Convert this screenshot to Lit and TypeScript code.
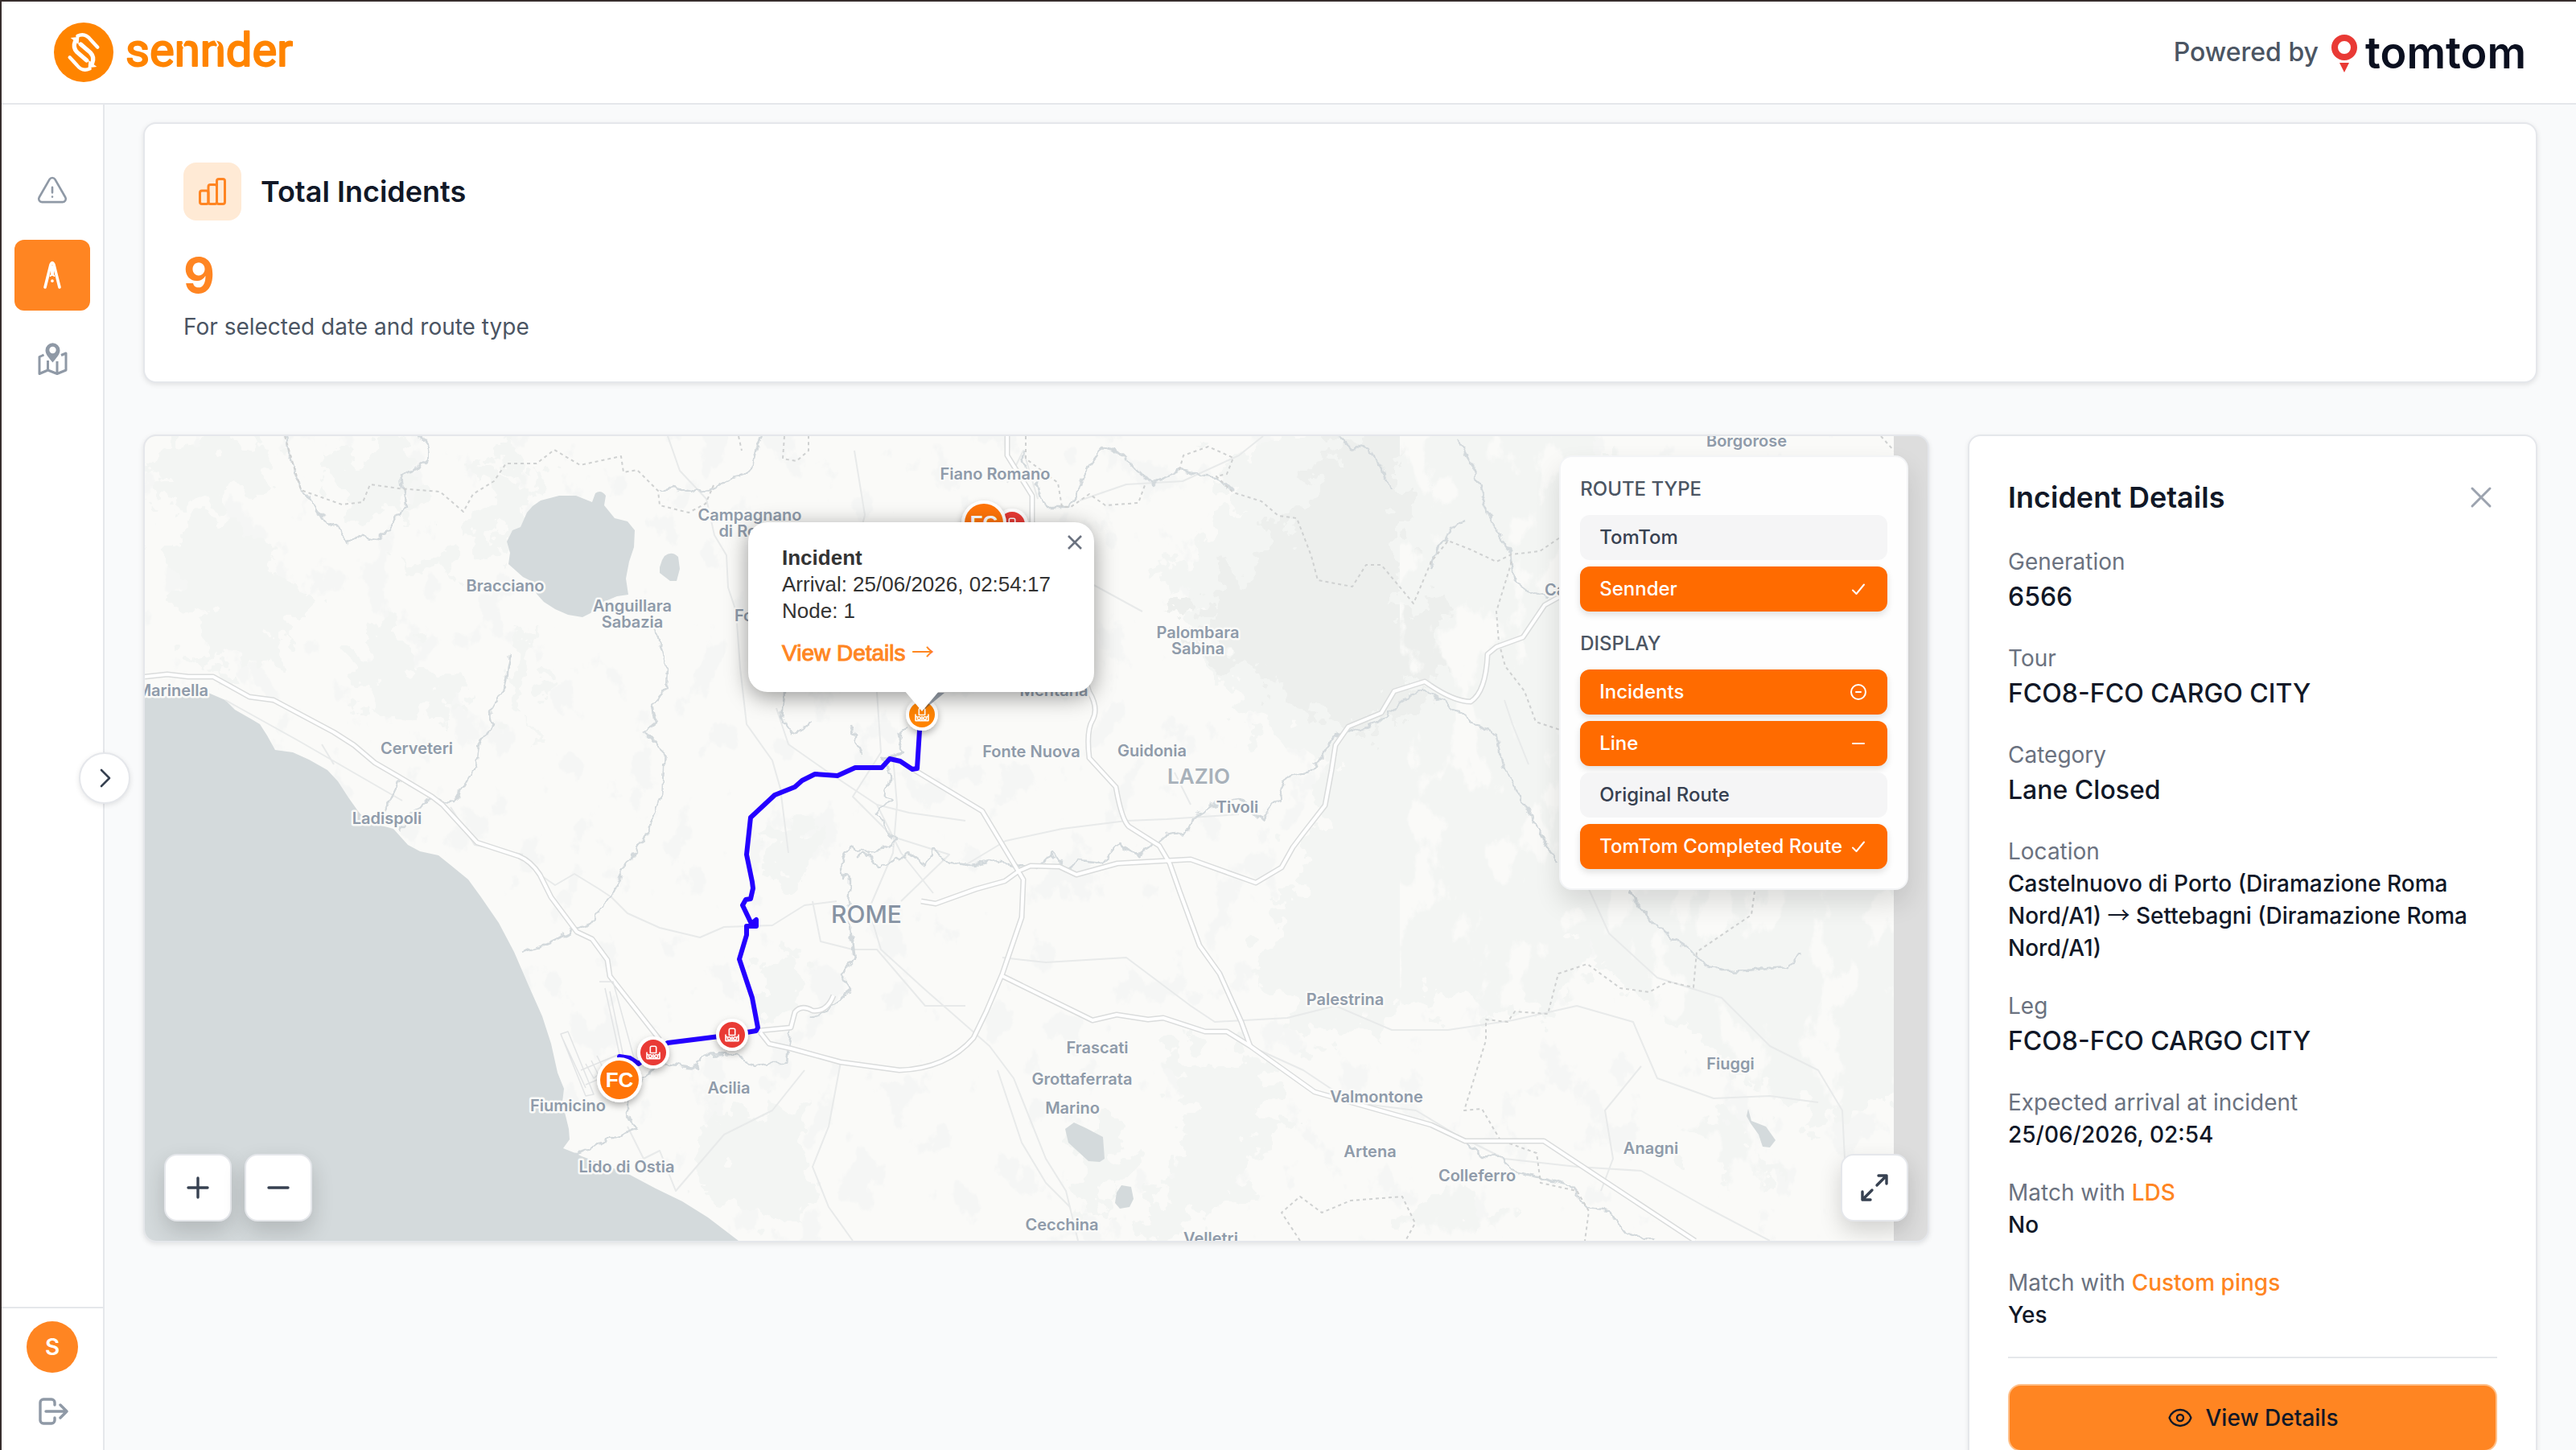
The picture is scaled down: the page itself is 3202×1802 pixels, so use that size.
import { LitElement, html, svg, css, nothing } from "lit";
import { customElement, property, state } from "lit/decorators.js";
import { classMap } from "lit/directives/class-map.js";

const base = css`
  *,
  *::before,
  *::after {
    box-sizing: border-box;
  }
  :host {
    font-family: Inter, "Liberation Sans", sans-serif;
    color: #111827;
  }
  button {
    font: inherit;
    color: inherit;
    padding: 0;
    border: 0;
    background: none;
    cursor: pointer;
  }
  a {
    color: inherit;
    text-decoration: none;
  }
  svg {
    display: block;
  }
  h1,
  h2,
  h3,
  p,
  dl,
  dt,
  dd {
    margin: 0;
  }
  .arrow {
    font-family: "Noto Sans CJK JP", sans-serif;
    font-weight: 400;
    line-height: 1;
    -webkit-text-stroke: 0;
  }
`;

/* ---------- Header ---------- */

@customElement("app-header")
export class AppHeader extends LitElement {
  static styles = [
    base,
    css`
      :host {
        display: flex;
        align-items: center;
        justify-content: space-between;
        height: 128px;
        padding: 0 64px;
        background: #fff;
        border-bottom: 2px solid #e5e7eb;
      }
      .partner {
        display: flex;
        align-items: center;
        gap: 16px;
        font-size: 32px;
        font-weight: 500;
        line-height: 48px;
        color: #4b5563;
      }
      .brand-text {
        font-family: Roboto, sans-serif;
        font-size: 58px;
        font-weight: 400;
        fill: #ff8400;
        stroke: #ff8400;
        stroke-width: 2;
        stroke-linejoin: round;
      }
      .partner-text {
        font-family: Inter, sans-serif;
        font-size: 54px;
        font-weight: 600;
        fill: #0b1020;
      }
    `,
  ];

  render() {
    return html`
      <a href="#home" aria-label="sennder home">
        <svg width="304" height="80" viewBox="0 0 304 80">
          <circle cx="38" cy="40" r="37" fill="#ff8400" />
          <g transform="translate(1 3) scale(0.3333) translate(-36 -39)" fill="none" stroke="#fff" stroke-linecap="round">
            <g>
              <path d="M124 89Q152 76 172 102L199 131" stroke-width="13" />
              <path d="M115 110Q106 132 122 149L158 180" stroke-width="16" />
              <path d="M98 96L130 92L128 120Z" fill="#fff" stroke="none" />
            </g>
            <g transform="rotate(180 147 150)">
              <path d="M124 89Q152 76 172 102L199 131" stroke-width="13" />
              <path d="M115 110Q106 132 122 149L158 180" stroke-width="16" />
              <path d="M98 96L130 92L128 120Z" fill="#fff" stroke="none" />
            </g>
          </g>
          <text class="brand-text" x="90" y="57">sennder</text>
          <path d="M166 22L161 31L165 38" fill="none" stroke="#fff" stroke-width="2" />
          <path d="M200 22L205 31L201 38" fill="none" stroke="#fff" stroke-width="2" />
        </svg>
      </a>
      <div class="partner">
        <span>Powered by</span>
        <svg width="240" height="72" viewBox="0 -8 240 72">
          <circle cx="16" cy="22" r="12" fill="none" stroke="#e93a35" stroke-width="8" />
          <path d="M10 41H22L16 53Z" fill="#e93a35" />
          <text class="partner-text" x="42" y="48">tomtom</text>
        </svg>
      </div>
    `;
  }
}

/* ---------- Side navigation ---------- */

@customElement("side-nav")
export class SideNav extends LitElement {
  static styles = [
    base,
    css`
      :host {
        position: relative;
        z-index: 2;
        display: flex;
        flex-direction: column;
        justify-content: space-between;
        width: 128px;
        background: #fff;
        border-right: 2px solid #e5e7eb;
        color: #8f99a6;
      }
      .links {
        display: flex;
        flex-direction: column;
        gap: 16px;
        padding: 64px 16px;
      }
      .link {
        display: grid;
        place-items: center;
        height: 88px;
        border-radius: 12px;
      }
      .link.active {
        background: #ff8522;
        color: #fff;
      }
      .account {
        display: flex;
        flex-direction: column;
        align-items: center;
        gap: 24px;
        padding: 16px 0 26px;
        border-top: 2px solid #e5e7eb;
      }
      .avatar {
        display: grid;
        place-items: center;
        width: 64px;
        height: 64px;
        border-radius: 50%;
        background: #ff8522;
        color: #fff;
        font-size: 28px;
        font-weight: 600;
      }
      .toggle {
        position: absolute;
        top: 50%;
        right: -34px;
        display: grid;
        place-items: center;
        width: 64px;
        height: 64px;
        transform: translateY(-50%);
        border: 2px solid #e5e7eb;
        border-radius: 50%;
        background: #fff;
        color: #374151;
        box-shadow: 0 2px 6px rgba(0, 0, 0, 0.1);
      }
    `,
  ];

  render() {
    return html`
      <nav class="links" aria-label="Main">
        <a class="link" href="#incidents" aria-label="Incidents">
          <svg width="42" height="42" viewBox="0 0 24 24" fill="none" stroke="currentColor" stroke-width="1.5" stroke-linecap="round" stroke-linejoin="round">
            <path d="M12 9v3.75m-9.303 3.376c-.866 1.5.217 3.374 1.948 3.374h14.71c1.73 0 2.813-1.874 1.948-3.374L13.949 3.378c-.866-1.5-3.032-1.5-3.898 0L2.697 16.126zM12 15.75h.007v.008H12v-.008z" />
          </svg>
        </a>
        <a class="link active" href="#routes" aria-label="Routes" aria-current="page">
          <svg width="40" height="40" viewBox="0 0 40 40" fill="none" stroke="currentColor" stroke-width="3.6" stroke-linecap="round" stroke-linejoin="round">
            <path d="M11 35L18 7Q20 2 22 7L29 35" />
            <path d="M20 10V19" stroke-width="4" />
            <path d="M20 27V27.2" />
            <path d="M17.6 21L20 18L22.4 21" stroke-width="2" />
          </svg>
        </a>
        <a class="link" href="#map" aria-label="Map">
          <svg width="40" height="40" viewBox="0 0 40 40" fill="none" stroke="currentColor" stroke-width="3" stroke-linejoin="round">
            <path d="M20.5 24.5C16 19 11.5 14.5 11.5 9.3a9 9 0 0 1 18 0C29.5 14.5 25 19 20.5 24.5Z" fill="currentColor" stroke="none" />
            <circle cx="20.5" cy="9" r="4.2" fill="#fff" stroke="none" />
            <path d="M9.5 15L4 17.5V38.5L14.5 34L26 38.5L37 34V13L31 15.5" />
            <path d="M14.5 22V34M26 23V38" />
          </svg>
        </a>
      </nav>
      <div class="account">
        <span class="avatar">S</span>
        <button aria-label="Log out">
          <svg width="40" height="48" viewBox="0 0 40 48" fill="none" stroke="currentColor" stroke-width="3.4" stroke-linecap="round" stroke-linejoin="round">
            <path d="M23 16V13a4 4 0 0 0-4-4H9a4 4 0 0 0-4 4v22a4 4 0 0 0 4 4h10a4 4 0 0 0 4-4V32" />
            <path d="M12 24H38M30 16L38 24L30 32" />
          </svg>
        </button>
      </div>
      <button class="toggle" aria-label="Expand navigation">
        <svg width="24" height="24" viewBox="0 0 24 24" fill="none" stroke="currentColor" stroke-width="2.6" stroke-linecap="round" stroke-linejoin="round">
          <path d="M8 2L18 12L8 22" />
        </svg>
      </button>
    `;
  }
}

/* ---------- Incident map ---------- */

const SEA =
  "M180 867L259 861L280 870L292 882L313 894L323 900L332 914L342 932L364 935L384 944L407 957L420 971L433 991L445 1008L456 1021L489 1030L507 1050L522 1058L545 1063L560 1075L582 1093L598 1115L620 1147L639 1183L658 1227L674 1263L685 1297L693 1333L701 1353L699 1370L707 1403L708 1416L700 1427L715 1433L723 1437L745 1445L783 1460L815 1477L848 1493L880 1513L918 1542H180Z";

const LAKES = [
  "M655 637L662 629L672 622L695 616L716 616L736 624L740 613Q747 608 753 616L751 628L764 644L780 648L789 659L788 680L782 698L778 719L781 739L767 741L745 750L734 762L724 767L706 764L690 757L676 748L667 738L660 722L650 717L632 701L634 687L630 673L637 659L647 655Z",
  "M823 696L826 691Q835 684 843 692L845 707L841 722H833L820 712L820 705Z",
  "M1335 1395L1350 1402L1371 1413L1373 1440L1367 1444L1353 1443L1328 1420L1324 1403Z",
  "M1394 1473L1406 1475L1409 1490L1404 1500L1392 1502L1386 1495L1388 1482Z",
  "M2173 1378L2177 1393L2195 1400L2207 1417L2200 1426L2191 1425L2186 1410L2176 1396L2171 1387Z",
];

const MOTORWAYS = [
  "M180 841L208 838L234 841L265 841L310 866L340 870L415 910L440 926L466 948L497 966L537 990L550 1000L593 1047L645 1064Q660 1070 671 1087L685 1115L717 1158L736 1167L755 1193L758 1213L820 1292",
  "M1252 542V566L1283 616V680",
  "M1300 700L1354 860Q1366 880 1358 895Q1350 908 1354 942L1387 978Q1394 1018 1403 1027L1441 1051L1454 1073L1466 1107L1491 1175L1516 1210L1543 1270L1554 1300",
  "M1135 956L1221 1008L1272 1093L1270 1140L1246 1210L1226 1257L1210 1290Q1177 1328 1118 1330L1045 1320L983 1303L956 1297L945 1283",
  "M1145 1120L1163 1123L1213 1105L1249 1095L1267 1082L1281 1076L1317 1077L1338 1087L1389 1073L1480 1068L1561 1097L1593 1078L1607 1053L1619 1037L1647 1001L1655 958L1660 926L1676 903L1717 886L1733 859L1771 847Q1806 872 1828 872Q1847 860 1849 813L1860 804L1893 792L1920 752L1945 738",
  "M1246 1213L1358 1268L1388 1261L1427 1267L1446 1265L1498 1282H1525L1554 1300L1634 1357L1779 1398L1821 1418H1919L2107 1542",
  "M942 1281L983 1277L988 1258Q996 1248 1010 1256Q1028 1258 1036 1237",
];

const MINOR_ROADS = [
  "M830 542L845 585L878 620L888 665L903 690L905 730L915 760L920 830L928 900L960 945L970 980L980 1060",
  "M671 1087L690 1100L714 1086L745 1105L760 1115L780 1135L820 1153L870 1165L900 1152L960 1150L1000 1125L1040 1120",
  "M1062 560L1075 640L1060 700M1090 860L1095 935L1060 990L1110 1040L1180 1062L1120 1120",
  "M965 880L980 925L1030 960L1090 1000L1120 1060L1160 1110",
  "M1110 940L1115 1000L1110 1060L1080 1130L1095 1180L1150 1230L1230 1300L1260 1340L1300 1440L1325 1480L1340 1542",
  "M1200 1075L1250 1045L1320 1030L1400 1020L1450 1018L1540 1012",
  "M1246 1190L1300 1196L1400 1190L1440 1220L1480 1250L1510 1270L1600 1265L1660 1250L1730 1280L1800 1280L1880 1268L1960 1250L2030 1270L2060 1340L2130 1365L2200 1362L2260 1370",
  "M1554 1300L1620 1330L1680 1370L1760 1380L1810 1410L1870 1440L1960 1450L2040 1455L2120 1500L2200 1542",
  "M1975 1105L2000 1160L2060 1215L2140 1240L2200 1300L2260 1330L2290 1380L2295 1480",
  "M2040 1325L1995 1380L2005 1440L1990 1480",
  "M1252 600L1272 560L1290 620M1310 700L1420 760",
  "M1342 622L1400 602L1470 598L1540 566L1570 542",
  "M280 870L370 920L500 995M400 925L415 950M560 1003L590 1050L650 1062",
  "M1045 1320L1030 1400L1010 1450L1030 1500L1060 1542",
  "M1000 1330L960 1380L900 1410L840 1480L820 1430L800 1440L780 1400",
  "M1870 870L1880 900L1900 950M1960 640L1990 700",
  "M1010 1120L1020 1170L1060 1180L1090 1180L1150 1250L1200 1250",
  "M1480 1000L1460 960M1090 1000L1130 1010L1200 1020",
  "M1240 1330L1270 1420L1300 1470L1330 1500",
];

const RIVERS = [
  "M354 542L361 569L374 609L389 623L407 653Q420 648 423 658L432 674L445 665L468 669L486 655L504 628L499 592L509 589L531 569Q534 552 522 542",
  "M634 814L629 851L610 885L613 901L596 926L593 950L565 996L537 994L512 1007L496 1034M497 970L478 1010L476 1024",
  "M815 780L829 830L828 855L810 876L815 898L800 909L826 934L823 991L800 1044L777 1075L758 1117L734 1148L712 1157L680 1172L647 1184",
  "M1127 905Q1108 912 1124 934L1096 944Q1112 960 1105 975Q1090 985 1109 991L1089 1012L1114 1046Q1080 1064 1060 1052Q1040 1060 1048 1090Q1060 1070 1054 1120L1063 1193L1045 1210L1059 1230L1009 1267",
  "M983 1283L978 1320L955 1320L940 1326L913 1310L880 1312Q872 1306 867 1326L820 1322L804 1338L780 1350V1383L791 1403L745 1422L715 1433",
  "M948 542L940 556L935 580L925 592L910 595L890 605L870 612L850 608L835 605L820 610",
  "M1273 560Q1265 580 1285 590L1300 630L1331 630L1351 584L1372 555L1397 566L1415 585L1431 601L1466 585L1512 592L1533 612",
  "M1665 543L1680 556Q1706 556 1708 570L1720 582L1727 606",
  "M1811 543L1822 565L1833 583L1840 610L1855 652L1876 683L1882 721L1900 735L1925 742",
  "M1819 649L1804 655L1798 672L1788 680L1779 708",
  "M1441 1046L1450 1038L1476 1033L1485 1015L1507 1001L1540 992L1568 1019L1590 990L1600 966L1627 959L1640 945L1660 913L1690 905L1714 897L1740 875L1768 855L1800 875L1828 897L1860 913L1866 947L1885 980L1903 1016L1920 1045L1936 1073",
  "M1066 1066Q1080 1050 1090 1080L1130 1060L1150 1075L1160 1056L1180 1070L1206 1076L1240 1070L1290 1080L1310 1060L1325 1080L1339 1069L1370 1072L1390 1050L1415 1062L1441 1046",
  "M2023 1105L2040 1130L2069 1160L2105 1183L2120 1200L2141 1207L2170 1206L2222 1202L2239 1182",
  "M1815 1413L1840 1436L1869 1437L1880 1455L1920 1465L1951 1473L1973 1502L2000 1505L2020 1530L2055 1542",
  "M975 860L972 895L985 912L1008 898M1058 900L1070 940",
];

const BORDERS = [
  "M354 542L374 609L425 627L451 624L460 602L496 607L547 611L576 636L588 614L614 598L629 576H667L689 559L721 578L772 567L775 587L792 584L818 610L820 628L856 637L877 626L887 603",
  "M975 542L973 570L990 573L1005 560V542M918 542L922 560",
  "M1275 542V570L1315 600L1320 630L1331 630L1354 614L1374 628L1415 625L1423 603",
  "M1466 584L1471 566L1502 555L1533 569L1525 589L1512 592L1533 612L1568 623L1589 641L1612 644L1630 691L1638 721L1681 729L1698 702H1717L1757 750L1779 698L1800 672L1828 683L1860 698L1879 689L1914 685L1945 664",
  "M1879 698L1860 760L1863 798L1871 828L1895 859L1909 897L1945 909",
  "M2182 1100L2177 1137L2109 1183L2105 1227L2073 1220L2050 1233L2014 1228L1973 1198L1937 1210L1924 1260L1883 1257L1874 1270L1847 1267V1293L1820 1380L1842 1378L1865 1417L1910 1433L1915 1470L1960 1480L1975 1505L1970 1542",
  "M1616 1542L1593 1507L1616 1487L1643 1507L1679 1492L1743 1487L1759 1520L1747 1542",
  "M2338 542L2354 560",
];

const HILLS = [
  "M185 560L330 550L345 590L260 640L200 620Z",
  "M410 560L520 545L520 590L490 650L440 640L400 600Z",
  "M215 660L300 650L330 700L370 720L370 800L260 840L250 760L215 720Z",
  "M510 690L555 685L560 720L520 725Z",
  "M440 790L500 780L520 830L570 850L560 890L480 880L440 850Z",
  "M610 580L670 600L660 640L635 670L630 700L590 670Z",
  "M625 550L660 560L650 580L620 572Z",
  "M940 1030L1010 1020L1015 1080L960 1090Z",
  "M930 1200L990 1190L985 1260L945 1250Z",
  "M900 1390L1000 1370L1010 1500L920 1520L860 1450Z",
  "M640 820L660 800L665 890L645 920Z",
  "M1450 1300L1560 1310L1600 1400L1560 1440L1490 1530L1420 1540L1430 1480L1480 1440Z",
  "M1500 580L1700 480L2000 480V1100L1940 1260L1760 1240L1640 1300L1560 1200L1610 1090L1650 960L1560 900L1500 800L1450 700L1540 640Z",
  "M1940 1060H2420V1320L2260 1400L2120 1300L1990 1200Z",
  "M1760 1480L1860 1500L1880 1542H1740Z",
  "M1330 1400L1400 1400L1380 1500L1340 1480Z",
  "M2080 1380L2180 1400L2210 1480L2130 1440Z",
];

const PEAKS = [
  "M1660 560L1740 500V900L1640 900L1580 850L1510 810L1520 720L1580 680L1620 630Z",
  "M1700 770L1790 750L1805 810L1770 870L1720 890Z",
  "M1460 770L1500 750L1510 790L1470 800Z",
];

type Label = [string, number, number, ("end" | "start")?];
const LABELS: Label[] = [
  ["Borgorose", 2171, 555],
  ["Fiano Romano", 1237, 596],
  ["Campagnano", 932, 647],
  ["di Roma", 932, 667],
  ["Bracciano", 628, 735],
  ["Anguillara", 786, 760],
  ["Sabazia", 786, 780],
  ["Formello", 913, 772, "start"],
  ["Marinella", 259, 865, "end"],
  ["Cerveteri", 518, 937],
  ["Ladispoli", 481, 1024],
  ["Mentana", 1310, 865],
  ["Fonte Nuova", 1282, 941],
  ["Guidonia", 1432, 940],
  ["Tivoli", 1538, 1010],
  ["Palombara", 1489, 793],
  ["Sabina", 1489, 813],
  ["Carsoli", 1920, 740, "start"],
  ["Palestrina", 1672, 1249],
  ["Frascati", 1364, 1309],
  ["Grottaferrata", 1345, 1348],
  ["Marino", 1333, 1384],
  ["Valmontone", 1711, 1370],
  ["Artena", 1703, 1438],
  ["Colleferro", 1836, 1468],
  ["Anagni", 2052, 1434],
  ["Fiuggi", 2151, 1329],
  ["Cecchina", 1320, 1529],
  ["Velletri", 1505, 1546],
  ["Fiumicino", 706, 1381],
  ["Acilia", 906, 1359],
  ["Lido di Ostia", 779, 1457],
];

const ROUTE =
  "M1146 888L1143 908L1140 955L1134 956L1119 946L1106 943L1096 954H1063L1041 964L1013 962L997 970L988 978L963 988L933 1016L928 1062L935 1096L936 1104L933 1117L927 1118L923 1125L934 1148L940 1143V1151L928 1151L928 1162L919 1192L935 1240L942 1277L940 1281L910 1286L830 1296L812 1308L794 1322L783 1315L770 1313";

interface Toggle {
  label: string;
  on: boolean;
  icon: "check" | "ring" | "dash";
}

@customElement("incident-map")
export class IncidentMap extends LitElement {
  @state() private routes: Toggle[] = [
    { label: "TomTom", on: false, icon: "check" },
    { label: "Sennder", on: true, icon: "check" },
  ];
  @state() private layers: Toggle[] = [
    { label: "Incidents", on: true, icon: "ring" },
    { label: "Line", on: true, icon: "dash" },
    { label: "Original Route", on: false, icon: "check" },
    { label: "TomTom Completed Route", on: true, icon: "check" },
  ];
  @state() private popupOpen = true;

  static styles = [
    base,
    css`
      :host {
        position: relative;
        display: block;
        height: 1004px;
        overflow: hidden;
        border: 2px solid #e5e7eb;
        border-radius: 16px;
        background: #ddd;
        box-shadow: 0 2px 6px rgba(0, 0, 0, 0.1);
      }
      .tiles {
        position: absolute;
        top: 0;
        left: 0;
      }
      .place {
        font-size: 20px;
        font-weight: 600;
        fill: #8f9baa;
        stroke: #fafaf8;
        stroke-width: 5;
        stroke-linejoin: round;
        paint-order: stroke;
      }
      .place.region {
        font-size: 26px;
        fill: #a8b1ba;
      }
      .place.capital {
        font-size: 30px;
        font-weight: 500;
        fill: #8793a3;
      }
      .code {
        font-family: "Liberation Sans", sans-serif;
        font-size: 26px;
        font-weight: 700;
        fill: #fff;
      }
      .popup {
        position: absolute;
        left: 750px;
        top: 107px;
        width: 430px;
        padding: 28px 48px 30px 42px;
        border-radius: 24px;
        background: #fff;
        box-shadow: 0 6px 28px rgba(0, 0, 0, 0.4);
        font-family: "Liberation Sans", sans-serif;
        font-size: 26px;
        line-height: 33px;
        color: #333;
      }
      .popup-link {
        display: block;
        margin-top: 18px;
        font-size: 28px;
        line-height: 36px;
        color: #ff8522;
        -webkit-text-stroke: 1px #ff8522;
      }
      .popup-close {
        position: absolute;
        top: 0;
        right: 0;
        display: grid;
        place-items: center;
        width: 48px;
        height: 50px;
        color: #6b7280;
      }
      .popup-tip {
        position: absolute;
        left: 190px;
        top: 209px;
      }
      .panel {
        position: absolute;
        top: 24px;
        right: 24px;
        display: flex;
        flex-direction: column;
        gap: 24px;
        padding: 24px;
        border: 2px solid #f3f4f6;
        border-radius: 16px;
        background: #fefefe;
        box-shadow: 0 16px 32px rgba(0, 0, 0, 0.12);
        font-size: 24px;
        font-weight: 500;
        line-height: 32px;
        color: #374151;
      }
      .group {
        display: flex;
        flex-direction: column;
        gap: 8px;
      }
      .group-title {
        margin-bottom: 8px;
        font-size: 24px;
        font-weight: 500;
        line-height: 32px;
        color: #4b5563;
      }
      .option {
        display: flex;
        align-items: center;
        justify-content: space-between;
        gap: 8px;
        height: 56px;
        padding: 0 24px;
        border-radius: 12px;
        background: #f5f5f6;
        white-space: nowrap;
      }
      .option.on {
        background: #ff6b00;
        color: #fff;
        box-shadow: 0 4px 8px rgba(0, 0, 0, 0.12);
      }
      .controls {
        position: absolute;
        right: 24px;
        bottom: 24px;
        left: 24px;
        display: flex;
        gap: 16px;
      }
      .control {
        display: grid;
        place-items: center;
        width: 84px;
        height: 84px;
        border: 2px solid #e5e7eb;
        border-radius: 16px;
        background: #fff;
        color: #374151;
        box-shadow: 0 12px 28px rgba(0, 0, 0, 0.16);
      }
      .control:last-child {
        margin-left: auto;
      }
    `,
  ];

  private flip(list: "routes" | "layers", index: number) {
    this[list] = this[list].map((t, i) => (i === index ? { ...t, on: !t.on } : t));
  }

  private toggleIcon(icon: Toggle["icon"]) {
    const shape =
      icon === "check"
        ? svg`<path d="M5 13.5L9.5 18L19 6.5" />`
        : icon === "ring"
          ? svg`<circle cx="12" cy="12" r="9" /><path d="M9 12H15" />`
          : svg`<path d="M5 12H19" />`;
    return html`<svg width="24" height="24" viewBox="0 0 24 24" fill="none" stroke="currentColor" stroke-width="2" stroke-linecap="round" stroke-linejoin="round">${shape}</svg>`;
  }

  private group(title: string, key: "routes" | "layers") {
    return html`
      <section class="group">
        <h3 class="group-title">${title}</h3>
        ${this[key].map(
          (t, i) => html`
            <button class=${classMap({ option: true, on: t.on })} aria-pressed=${t.on ? "true" : "false"} @click=${() => this.flip(key, i)}>
              <span>${t.label}</span>${t.on ? this.toggleIcon(t.icon) : nothing}
            </button>
          `,
        )}
      </section>
    `;
  }

  private incidentPin(x: number, y: number, color: string) {
    return svg`
      <g transform="translate(${x} ${y})">
        <circle r="20" fill="#fff" filter="url(#pin-shadow)" />
        <circle r="16" fill=${color} />
        <g fill="none" stroke="#fff" stroke-width="1.6" stroke-linejoin="round">
          <path d="M-3.7 0.5V-6Q-3.7 -7.8 -2 -7.8H2Q3.7 -7.8 3.7 -6V0.5Z" />
          <path d="M-8 -0.5V7.6H8V-0.5M-8 2.6H-5.5M8 2.6H5.5M0 2V7" />
          <circle cx="-3.7" cy="4.6" r="1.9" />
          <circle cx="3.7" cy="4.6" r="1.9" />
        </g>
      </g>`;
  }

  private hubPin(x: number, y: number) {
    return svg`
      <g transform="translate(${x} ${y})">
        <circle r="28" fill="#fff" filter="url(#pin-shadow)" />
        <circle r="24" fill="#ff7408" />
        <text class="code" text-anchor="middle" y="9">FC</text>
      </g>`;
  }

  private tiles() {
    return html`
      <svg class="tiles" width="2174" height="1000" viewBox="180 542 2174 1000" role="img" aria-label="Map of Rome and surroundings">
        <defs>
          <filter id="rough" x="-10%" y="-10%" width="120%" height="120%" color-interpolation-filters="sRGB">
            <feTurbulence type="fractalNoise" baseFrequency="0.03" numOctaves="4" seed="7" />
            <feDisplacementMap in="SourceGraphic" scale="110" xChannelSelector="R" yChannelSelector="G" />
          </filter>
          <filter id="river-wobble" x="-5%" y="-5%" width="110%" height="110%" color-interpolation-filters="sRGB">
            <feTurbulence type="fractalNoise" baseFrequency="0.08" numOctaves="2" seed="3" />
            <feDisplacementMap in="SourceGraphic" scale="12" xChannelSelector="R" yChannelSelector="G" />
          </filter>
          <filter id="speckle" x="0" y="0" width="100%" height="100%" color-interpolation-filters="sRGB">
            <feTurbulence type="fractalNoise" baseFrequency="0.022 0.016" numOctaves="5" seed="21" />
            <feColorMatrix values="0 0 0 0 0.961  0 0 0 0 0.965  0 0 0 0 0.961  16 0 0 0 -9.8" />
          </filter>
          <filter id="clearing" x="0" y="0" width="100%" height="100%" color-interpolation-filters="sRGB">
            <feTurbulence type="fractalNoise" baseFrequency="0.02 0.012" numOctaves="5" seed="44" />
            <feColorMatrix values="0 0 0 0 0.98  0 0 0 0 0.98  0 0 0 0 0.973  0 14 0 0 -8" />
          </filter>
          <filter id="pin-shadow" x="-50%" y="-50%" width="200%" height="200%">
            <feDropShadow dx="0" dy="4" stdDeviation="4" flood-opacity="0.3" />
          </filter>
        </defs>
        <rect x="180" y="542" width="2174" height="1000" fill="#fafaf8" />
        <rect x="180" y="542" width="2174" height="1000" filter="url(#speckle)" />
        <g filter="url(#rough)" fill="#f3f5f3">${HILLS.map((d) => svg`<path d=${d} />`)}</g>
        <g filter="url(#rough)" fill="#edefed">${PEAKS.map((d) => svg`<path d=${d} />`)}</g>
        <rect x="1740" y="542" width="614" height="1000" filter="url(#clearing)" />
        <g fill="#d4dadc">
          <path d=${SEA} />
          ${LAKES.map((d) => svg`<path d=${d} />`)}
        </g>
        <g fill="none" stroke-linejoin="round">
          <g stroke="#e8eaea" stroke-width="2">${MINOR_ROADS.map((d) => svg`<path d=${d} />`)}</g>
          <g stroke="#d3d9dc" stroke-width="2.5" filter="url(#river-wobble)">${RIVERS.map((d) => svg`<path d=${d} />`)}</g>
          <g stroke="#cfd1d1" stroke-width="2" stroke-dasharray="4 4">${BORDERS.map((d) => svg`<path d=${d} />`)}</g>
          <g stroke="#dadcdc" stroke-width="7">${MOTORWAYS.map((d) => svg`<path d=${d} />`)}</g>
          <g stroke="#fff" stroke-width="4">${MOTORWAYS.map((d) => svg`<path d=${d} />`)}</g>
          <g stroke="#e2e4e5" stroke-width="1.5">
            <path d="M745 1220L762 1220L790 1322L728 1348M752 1228L770 1310L722 1330M758 1232L776 1318" />
            <path d="M697 1285L706 1282L738 1360L728 1362ZM700 1292L728 1352" />
            <path d="M728 1322L738 1340L750 1330M735 1318L745 1338M742 1312L752 1332" />
          </g>
        </g>
        ${LABELS.map(([name, x, y, anchor]) => svg`<text class="place" x=${x} y=${y} text-anchor=${anchor ?? "middle"}>${name}</text>`)}
        <text class="place region" x="1490" y="974" text-anchor="middle">LAZIO</text>
        <text class="place capital" x="1077" y="1147" text-anchor="middle">ROME</text>
        <path d=${ROUTE} fill="none" stroke="#2400ff" stroke-width="6" stroke-linejoin="round" stroke-linecap="round" />
        ${this.incidentPin(1258, 652, "#e93a35")} ${this.hubPin(1223, 650)}
        ${this.incidentPin(910, 1286, "#e93a35")} ${this.incidentPin(812, 1308, "#e93a35")}
        ${this.hubPin(770, 1342)} ${this.incidentPin(1146, 888, "#ff8400")}
      </svg>
    `;
  }

  render() {
    return html`
      ${this.tiles()}
      ${this.popupOpen
        ? html`
            <div class="popup" role="dialog" aria-label="Incident">
              <strong>Incident</strong>
              <p>Arrival: 25/06/2026, 02:54:17</p>
              <p>Node: 1</p>
              <a class="popup-link" href="#details">View Details <span class="arrow">→</span></a>
              <button class="popup-close" aria-label="Close popup" @click=${() => (this.popupOpen = false)}>
                <svg width="18" height="18" viewBox="0 0 18 18" fill="none" stroke="currentColor" stroke-width="2.6">
                  <path d="M1 1L17 17M17 1L1 17" />
                </svg>
              </button>
              <svg class="popup-tip" width="60" height="36" viewBox="0 0 60 36">
                <path d="M26 26L44 3H54Z" fill="#334155" opacity="0.5" />
                <path d="M4 0H48L26 26Z" fill="#fff" />
              </svg>
            </div>
          `
        : nothing}
      <div class="panel">${this.group("ROUTE TYPE", "routes")} ${this.group("DISPLAY", "layers")}</div>
      <div class="controls">
        <button class="control" aria-label="Zoom in">
          <svg width="40" height="40" viewBox="0 0 40 40" stroke="currentColor" stroke-width="3.4" stroke-linecap="round"><path d="M8 20H32M20 8V32" /></svg>
        </button>
        <button class="control" aria-label="Zoom out">
          <svg width="40" height="40" viewBox="0 0 40 40" stroke="currentColor" stroke-width="3.4" stroke-linecap="round"><path d="M8 20H32" /></svg>
        </button>
        <button class="control" aria-label="Full screen">
          <svg width="40" height="40" viewBox="0 0 40 40" fill="none" stroke="currentColor" stroke-width="3.4" stroke-linecap="round" stroke-linejoin="round">
            <path d="M25 5H35V15M35 5L23 17M15 35H5V25M5 35L17 23" />
          </svg>
        </button>
      </div>
    `;
  }
}

/* ---------- Incident details ---------- */

interface Detail {
  label: string;
  link?: string;
  value: unknown;
  small?: boolean;
}

@customElement("incident-details")
export class IncidentDetails extends LitElement {
  @property({ attribute: false }) details: Detail[] = [];

  static styles = [
    base,
    css`
      :host {
        display: block;
        padding: 48px;
        border: 2px solid #e5e7eb;
        border-radius: 16px;
        background: #fff;
        box-shadow: 0 2px 6px rgba(0, 0, 0, 0.08);
        font-size: 28px;
        line-height: 40px;
      }
      .head {
        display: flex;
        align-items: center;
        justify-content: space-between;
        margin-bottom: 32px;
      }
      .title {
        font-size: 36px;
        font-weight: 600;
        line-height: 56px;
      }
      .close {
        color: #9ca3af;
      }
      .list {
        display: flex;
        flex-direction: column;
        gap: 32px;
      }
      .label {
        color: #6b7280;
      }
      .label-link {
        color: #ff8522;
        font-weight: 500;
      }
      .value {
        font-size: 32px;
        font-weight: 500;
        line-height: 48px;
      }
      .value.small {
        font-size: 28px;
        line-height: 40px;
      }
      .foot {
        margin-top: 32px;
        padding-top: 32px;
        border-top: 2px solid #e5e7eb;
      }
      .primary {
        display: flex;
        align-items: center;
        justify-content: center;
        gap: 16px;
        width: 100%;
        height: 84px;
        border: 2px solid #ffc08a;
        border-radius: 16px;
        background: #ff8522;
        font-weight: 500;
      }
    `,
  ];

  render() {
    return html`
      <div class="head">
        <h2 class="title">Incident Details</h2>
        <button class="close" aria-label="Close details">
          <svg width="40" height="40" viewBox="0 0 40 40" stroke="currentColor" stroke-width="3" stroke-linecap="round"><path d="M9 9L31 31M31 9L9 31" /></svg>
        </button>
      </div>
      <dl class="list">
        ${this.details.map(
          (d) => html`
            <div>
              <dt class="label">${d.label}${d.link ? html` <a class="label-link" href="#match">${d.link}</a>` : nothing}</dt>
              <dd class=${classMap({ value: true, small: !!d.small })}>${d.value}</dd>
            </div>
          `,
        )}
      </dl>
      <div class="foot">
        <button class="primary">
          <svg width="32" height="32" viewBox="0 0 24 24" fill="none" stroke="currentColor" stroke-width="1.8" stroke-linecap="round" stroke-linejoin="round">
            <path d="M2.036 12.322a1.012 1.012 0 0 1 0-.639C3.423 7.51 7.36 4.5 12 4.5c4.638 0 8.573 3.007 9.963 7.178.07.207.07.431 0 .639C20.577 16.49 16.64 19.5 12 19.5c-4.638 0-8.573-3.007-9.963-7.178Z" />
            <circle cx="12" cy="12" r="3" />
          </svg>
          View Details
        </button>
      </div>
    `;
  }
}

/* ---------- Page ---------- */

const DETAILS: Detail[] = [
  { label: "Generation", value: "6566" },
  { label: "Tour", value: "FCO8-FCO CARGO CITY" },
  { label: "Category", value: "Lane Closed" },
  {
    label: "Location",
    value: html`Castelnuovo di Porto (Diramazione Roma Nord/A1) <span class="arrow">→</span> Settebagni (Diramazione Roma Nord/A1)`,
    small: true,
  },
  { label: "Leg", value: "FCO8-FCO CARGO CITY" },
  { label: "Expected arrival at incident", value: "25/06/2026, 02:54", small: true },
  { label: "Match with", link: "LDS", value: "No", small: true },
  { label: "Match with", link: "Custom pings", value: "Yes", small: true },
];

@customElement("app-root")
export class AppRoot extends LitElement {
  static styles = [
    base,
    css`
      :host {
        display: flex;
        flex-direction: column;
        height: 100vh;
        overflow: hidden;
        border-top: 2px solid #372e2d;
        border-left: 2px solid #372e2d;
        background: #f9fafb;
      }
      app-header {
        flex: none;
      }
      .body {
        display: flex;
        flex: 1;
        min-height: 0;
      }
      side-nav {
        flex: none;
      }
      .content {
        flex: 1;
        min-width: 0;
        padding: 22px 48px;
        overflow: hidden;
      }
      .summary {
        margin-bottom: 64px;
        padding: 48px;
        border: 2px solid #e5e7eb;
        border-radius: 16px;
        background: #fff;
        box-shadow: 0 2px 6px rgba(0, 0, 0, 0.1);
      }
      .summary-head {
        display: flex;
        align-items: center;
        gap: 24px;
        margin-bottom: 32px;
      }
      .summary-icon {
        display: grid;
        place-items: center;
        width: 72px;
        height: 72px;
        border-radius: 16px;
        background: #ffead5;
        color: #ff8522;
      }
      .summary-title {
        font-size: 36px;
        font-weight: 600;
        line-height: 56px;
      }
      .summary-count {
        margin-bottom: 8px;
        font-size: 60px;
        font-weight: 700;
        line-height: 72px;
        color: #ff8522;
      }
      .summary-note {
        font-size: 28px;
        line-height: 40px;
        color: #4b5563;
      }
      .columns {
        display: grid;
        grid-template-columns: repeat(4, minmax(0, 1fr));
        gap: 48px;
        align-items: start;
      }
      incident-map {
        grid-column: span 3;
      }
    `,
  ];

  render() {
    return html`
      <app-header></app-header>
      <div class="body">
        <side-nav></side-nav>
        <main class="content">
          <section class="summary">
            <div class="summary-head">
              <span class="summary-icon">
                <svg width="40" height="40" viewBox="0 0 40 40" fill="none" stroke="currentColor" stroke-width="3" stroke-linejoin="round">
                  <rect x="4.5" y="19" width="10.5" height="16.5" rx="2.5" />
                  <rect x="15" y="11.5" width="10.5" height="24" rx="2.5" />
                  <rect x="25.5" y="4.5" width="10" height="31" rx="2.5" />
                </svg>
              </span>
              <h1 class="summary-title">Total Incidents</h1>
            </div>
            <p class="summary-count">9</p>
            <p class="summary-note">For selected date and route type</p>
          </section>
          <div class="columns">
            <incident-map></incident-map>
            <incident-details .details=${DETAILS}></incident-details>
          </div>
        </main>
      </div>
    `;
  }
}
